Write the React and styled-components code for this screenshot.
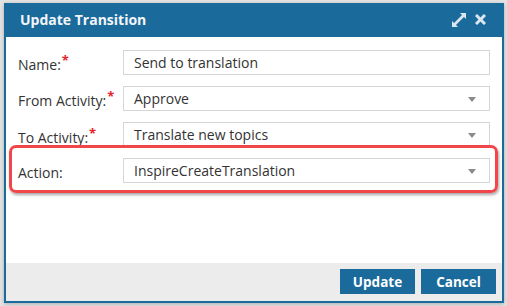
import React from "react";
import styled, { createGlobalStyle } from "styled-components";

const Global = createGlobalStyle`
  html, body { margin: 0; padding: 0; }
  body {
    background: #e4e4e4;
    font-family: "Open Sans", "Liberation Sans", sans-serif;
    width: 507px;
    height: 306px;
    overflow: hidden;
  }
`;

const Dialog = styled.div`
  margin: 3px 0 0 4px;
  width: 500px;
  height: 300px;
  box-sizing: border-box;
  border: 2px solid #1b6a9c;
  background: #fff;
  display: flex;
  flex-direction: column;
  box-shadow: 0 1px 4px rgba(0, 0, 0, 0.25);
`;

const Header = styled.div`
  height: 32px;
  flex: none;
  background: #1b6a9c;
  display: flex;
  align-items: center;
  justify-content: space-between;
  padding: 0 16px 0 14px;
`;

const Title = styled.div`
  color: #f2f6f9;
  font-weight: 700;
  font-size: 14px;
  margin-top: -3px;
`;

const Tools = styled.div`
  display: flex;
  align-items: center;
  gap: 9px;
  margin-top: -3px;
`;

const Body = styled.div`
  position: relative;
  flex: 1;
  padding: 13px 12px 0 12px;
  display: flex;
  flex-direction: column;
  gap: 11px;
`;

const Row = styled.div`
  display: flex;
  align-items: center;
  height: 25px;
`;

const Label = styled.div`
  width: 105px;
  flex: none;
  font-size: 14px;
  color: #333;
  margin-top: ${(p) => (p.$low ? "6px" : "4px")};
`;

const Star = styled.sup`
  color: #e8242a;
  font-size: 13px;
  font-weight: 700;
  vertical-align: 0;
  position: relative;
  top: -5px;
  margin-left: 1px;
`;

const Field = styled.div`
  flex: 1;
  height: 25px;
  box-sizing: border-box;
  border: 1px solid #d6d6d6;
  display: flex;
  align-items: center;
  justify-content: space-between;
  padding: 0 13px 0 10px;
  font-size: 14px;
  color: #333;
`;

const Arrow = styled.span`
  width: 0;
  height: 0;
  border-left: 4px solid transparent;
  border-right: 4px solid transparent;
  border-top: 5px solid #8a8a8a;
  margin-top: 2px;
`;

const Highlight = styled.div`
  position: absolute;
  left: 3px;
  top: 108px;
  width: 489px;
  height: 48px;
  box-sizing: border-box;
  border: 3px solid #f2474a;
  border-radius: 7px;
  box-shadow: 1px 2px 3px rgba(0, 0, 0, 0.35);
  pointer-events: none;
`;

const Footer = styled.div`
  height: 38px;
  flex: none;
  background: #ececec;
  display: flex;
  justify-content: flex-end;
  align-items: flex-start;
  gap: 6px;
  padding: 6px 6px 0 0;
  box-sizing: border-box;
`;

const Button = styled.button`
  width: 75px;
  height: 25px;
  border: none;
  background: #1b6a9c;
  color: #fff;
  font-family: "Open Sans", "Liberation Sans", sans-serif;
  font-weight: 700;
  font-size: 13.5px;
  padding: 0;
  cursor: pointer;
`;

const Expand = () => (
  <svg width="14" height="14" viewBox="0 0 14 14">
    <g fill="#dbe7f0">
      <polygon points="8,0 14,0 14,6" />
      <polygon points="0,8 0,14 6,14" />
    </g>
    <line x1="11.5" y1="2.5" x2="2.5" y2="11.5" stroke="#dbe7f0" strokeWidth="2.6" />
  </svg>
);

const Close = () => (
  <svg width="11" height="11" viewBox="0 0 11 11">
    <g stroke="#dbe7f0" strokeWidth="3" strokeLinecap="butt">
      <line x1="1" y1="1" x2="10" y2="10" />
      <line x1="10" y1="1" x2="1" y2="10" />
    </g>
  </svg>
);

export default function App() {
  return (
    <>
      <Global />
      <Dialog>
        <Header>
          <Title>Update Transition</Title>
          <Tools>
            <Expand />
            <Close />
          </Tools>
        </Header>
        <Body>
          <Row>
            <Label>
              Name:<Star>*</Star>
            </Label>
            <Field>Send to translation</Field>
          </Row>
          <Row>
            <Label>
              From Activity:<Star>*</Star>
            </Label>
            <Field>
              Approve
              <Arrow />
            </Field>
          </Row>
          <Row>
            <Label $low>
              To Activity:<Star>*</Star>
            </Label>
            <Field>
              Translate new topics
              <Arrow />
            </Field>
          </Row>
          <Row>
            <Label>Action:</Label>
            <Field>
              InspireCreateTranslation
              <Arrow />
            </Field>
          </Row>
          <Highlight />
        </Body>
        <Footer>
          <Button>Update</Button>
          <Button>Cancel</Button>
        </Footer>
      </Dialog>
    </>
  );
}
